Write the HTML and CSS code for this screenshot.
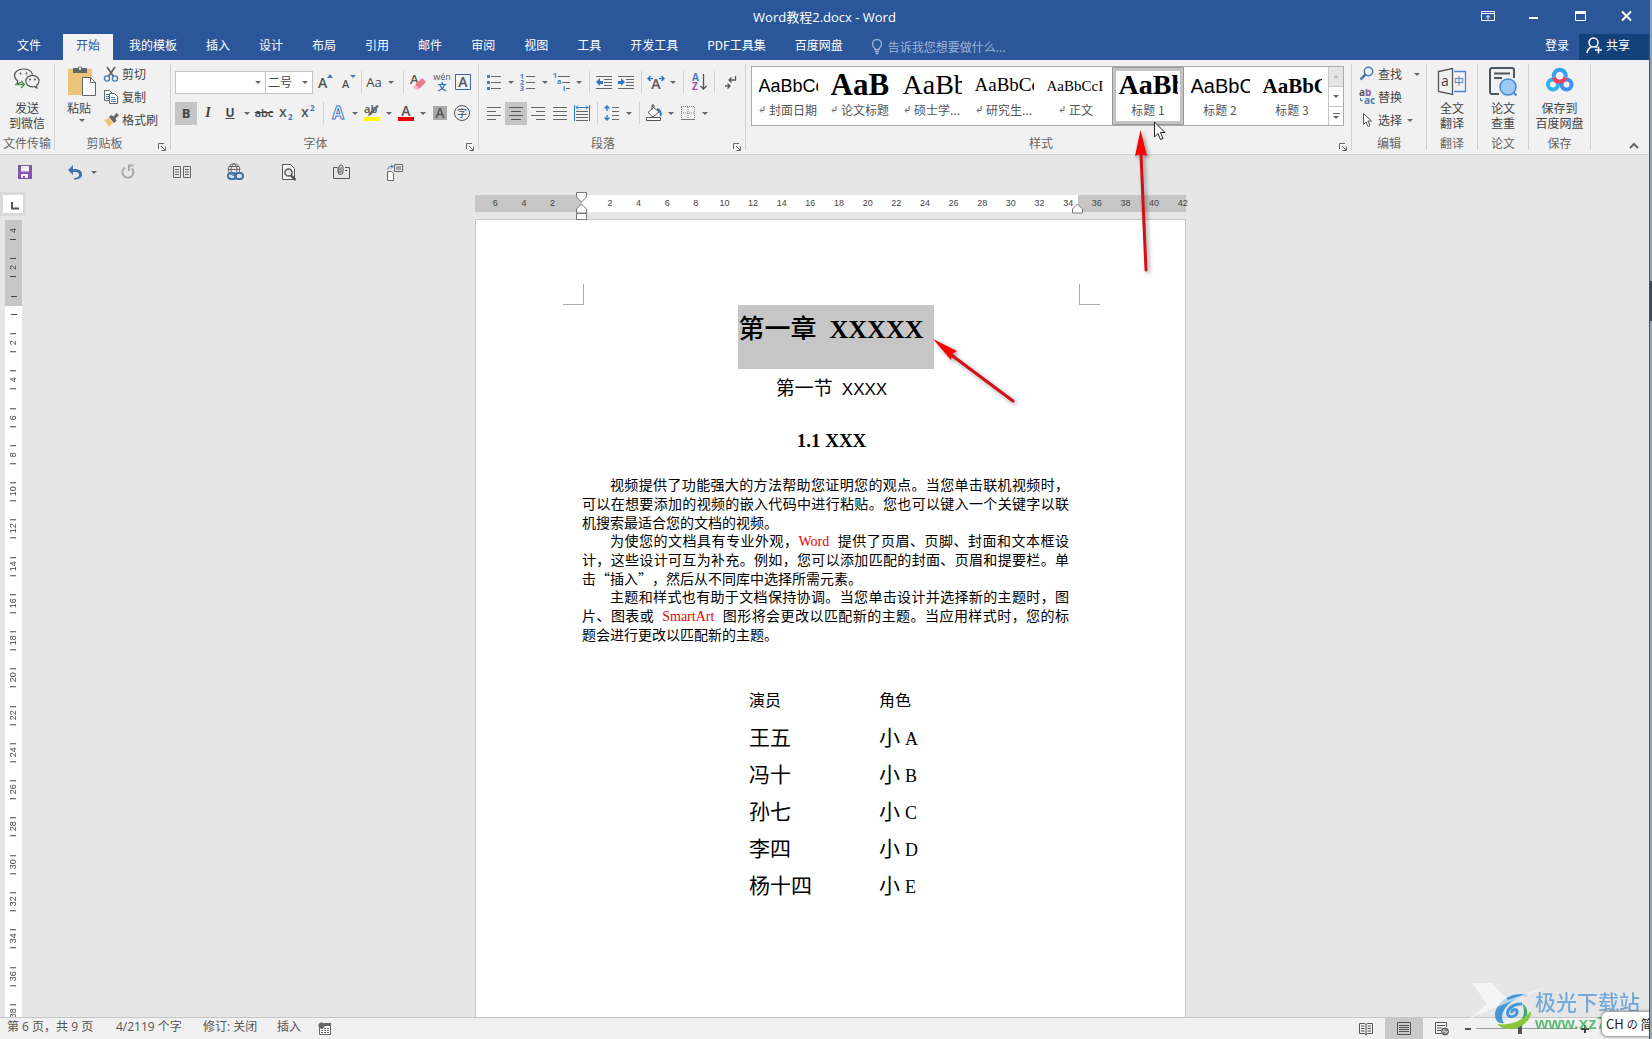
FILE: index.html
```html
<!DOCTYPE html>
<html lang="zh-CN">
<head>
<meta charset="utf-8">
<title>Word教程2.docx - Word</title>
<link rel="stylesheet" href="styles.css">
</head>
<body>
<div class="app">
  <header class="titlebar">
    <div class="doc-title">Word教程2.docx - Word</div>
    <div class="win-buttons">
      <button aria-label="功能区显示选项"><svg width="14" height="12" fill="none" stroke="#fff"><path d="M.5 1.5h13v9H.5zM.5 3.5h13M7 9.500V5.500M5 7.500l2-2 2 2"/></svg></button>
      <button aria-label="最小化"><svg width="10" height="12"><path d="M0 7h9v2H0z" fill="#fff"/></svg></button>
      <button aria-label="最大化"><svg width="11" height="12"><path d="M.5 1.500h10v9H.5z" fill="none" stroke="#fff"/><path d="M0 1h11v3H0z" fill="#fff"/></svg></button>
      <button aria-label="关闭"><svg width="11" height="12" stroke="#fff" stroke-width="2"><path d="M1 1.500l9 9M10 1.500l-9 9"/></svg></button>
    </div>
  </header>

  <nav class="tabs">
    <button class="tab file">文件</button>
    <button class="tab active">开始</button>
    <button class="tab">我的模板</button>
    <button class="tab">插入</button>
    <button class="tab">设计</button>
    <button class="tab">布局</button>
    <button class="tab">引用</button>
    <button class="tab">邮件</button>
    <button class="tab">审阅</button>
    <button class="tab">视图</button>
    <button class="tab">工具</button>
    <button class="tab">开发工具</button>
    <button class="tab">PDF工具集</button>
    <button class="tab">百度网盘</button>
    <button class="tell"><svg width="12" height="16" fill="none" stroke="#9db4d8" stroke-width="1.300"><path d="M4 10.500C4 8.500 1.500 8 1.500 5a4.500 4.500 0 0 1 9 0c0 3-2.500 3.500-2.500 5.500zM4 12.500h4M4.500 14.500h3"/></svg>告诉我您想要做什么...</button>
    <button class="login">登录</button>
    <button class="share"><svg width="16" height="17" fill="none" stroke="#fff" stroke-width="1.500"><circle cx="7.500" cy="5.500" r="4.500"/><path d="M1 16c.5-3 2-5 4.500-6.200M12.500 9.500v7M9 13h7M9.500 9.700l1.500 1"/></svg>共享</button>
  </nav>

  <div class="ribbon">
    <section class="group g-wechat">
      <button class="big"><svg width="28" height="32" fill="none" stroke="#555" stroke-width="1.200"><path d="M8 18.500c-1.500 0-2 .8-4 1.200l.8-2.700C2.500 15.500 1.500 13.500 1.500 11.500 1.500 7.500 5.500 5 10.500 5c4.500 0 8 2 9 5.500M14.500 21c-1-1-1.700-2-1.700-3.700 0-3.500 3-6 6.700-6s6.500 2.500 6.500 5.700c0 2-1 3.500-2.500 4.500l.5 2.500-2.700-1.500c-2 .5-4.800.2-6.800-1.500z"/><path d="M2 20.500h9M8 17l3.500 3.500L8 24" stroke="#4a9a55" stroke-width="1.500"/><g fill="#555" stroke="none"><circle cx="7.500" cy="9.500" r="1"/><circle cx="13.500" cy="9.500" r="1"/><circle cx="17" cy="15.500" r="1"/><circle cx="22" cy="15.500" r="1"/></g></svg><span>发送<br>到微信</span></button>
      <div class="label">文件传输</div>
    </section>

    <section class="group g-clip">
      <div class="clip">
        <button class="big paste"><svg width="30" height="32"><path d="M1 5h24v26H1z" fill="#ecc37a"/><path d="M6 4h4.500a2.800 2.800 0 0 1 5 0H20v5H6z" fill="#666"/><circle cx="13" cy="4.500" r="1.200" fill="#f1f1f1"/><path d="M15.500 13.500h8l5 5v13h-13z" fill="#fff" stroke="#666"/><path d="M23.500 13.500v5h5" fill="none" stroke="#666"/></svg><span>粘贴</span><i class="caret"></i></button>
        <div class="stack">
          <button><svg width="16" height="16" fill="none"><path d="M4 1l6.500 9.500M12 1L5.500 10.500" stroke="#666" stroke-width="1.800"/><circle cx="4" cy="12.500" r="2.600" stroke="#4a7ab5" stroke-width="1.300"/><circle cx="12" cy="12.500" r="2.600" stroke="#4a7ab5" stroke-width="1.300"/></svg>剪切</button>
          <button><svg width="16" height="16" fill="#fff" stroke="#666"><path d="M1.500 1.500h5l3 3v7h-8z"/><path d="M3 5.500h3M3 7.500h3M3 9.500h3" stroke="#4a7ab5"/><path d="M6.500 4.500h5l3 3v7h-8z"/><path d="M8 8.500h4M8 10.500h5M8 12.500h5" stroke="#4a7ab5"/></svg>复制</button>
          <button><svg width="16" height="16"><path d="M1 8l5-2 4 4.500L6 15z" fill="#ecc37a"/><path d="M6 5l2-2 2.500 1.500L13.500 1 16 3l-3.500 3.500 1 2.500-2.500 2z" fill="#666"/></svg>格式刷</button>
        </div>
      </div>
      <div class="label">剪贴板<svg class="launch" width="8" height="8" fill="none" stroke="#666"><path d="M.5 6V.5H6M3 3l4 4M7.500 3.500v4h-4"/></svg></div>
    </section>

    <section class="group g-font">
      <div class="row font1">
        <button class="combo" aria-label="字体"><span></span><i class="caret"></i></button>
        <button class="combo" aria-label="字号"><span>二号</span><i class="caret"></i></button>
        <button><svg class="ic"><text x="4" y="17" class="t14">A</text><path d="M13 7l3-4 3 4z" fill="#4a7ab5"/></svg></button>
        <button><svg class="ic"><text x="5" y="17" class="t12">A</text><path d="M13 4h6l-3 3z" fill="#4a7ab5"/></svg></button>
        <i class="sep"></i>
        <button class="split"><span class="aa">Aa</span><i class="caret"></i></button>
        <i class="sep"></i>
        <button><svg class="ic"><text x="3" y="13" class="t13">A</text><path d="M8 14l7-7 4 4-7 7z" fill="#e87a8c"/><path d="M8 14l4 4-2 1-4-3z" fill="#f2b4bd"/></svg></button>
        <button><svg class="ic"><text x="11" y="9" class="t11" text-anchor="middle">wén</text><text x="11" y="19" font-size="9" fill="#2f6db5" font-weight="700" text-anchor="middle">文</text></svg></button>
        <button><svg class="ic"><path d="M3.500 3.500h15v15h-15z" fill="none" stroke="#3f6797"/><text x="11" y="16" class="t15" text-anchor="middle">A</text></svg></button>
      </div>
      <div class="row font2">
        <button class="on"><b>B</b></button>
        <button><i class="italic">I</i></button>
        <button class="split"><u>U</u><i class="caret"></i></button>
        <button><s>abc</s></button>
        <button><svg class="ic"><text x="4" y="15" class="t15">x</text><text x="13" y="18" font-size="8" fill="#4a7ab5" font-weight="700">2</text></svg></button>
        <button><svg class="ic"><text x="4" y="15" class="t15">x</text><text x="13" y="9" font-size="8" fill="#4a7ab5" font-weight="700">2</text></svg></button>
        <i class="sep"></i>
        <button class="split"><svg class="ic"><text x="11" y="17" font-size="17" font-weight="700" text-anchor="middle" fill="#fff" stroke="#3f78bd">A</text></svg><i class="caret"></i></button>
        <button class="split"><svg class="ic"><text x="3" y="11" class="t12">ab</text><path d="M18 4l-8 9-3 1 1-3 8-8z" fill="#666"/><path d="M3 15h16v4H3z" fill="#ff0"/></svg><i class="caret"></i></button>
        <button class="split"><svg class="ic"><text x="11" y="14" class="t15" text-anchor="middle">A</text><path d="M3 15h16v4H3z" fill="#e60000"/></svg><i class="caret"></i></button>
        <button><svg class="ic"><path d="M4 4h14v14H4z" fill="#aaa"/><text x="11" y="16" class="t15" text-anchor="middle">A</text></svg></button>
        <button><svg class="ic"><circle cx="11" cy="11" r="7.500" fill="none" stroke="#555"/><text x="11" y="15" font-size="10" fill="#444" text-anchor="middle">字</text></svg></button>
      </div>
      <div class="label">字体<svg class="launch" width="8" height="8" fill="none" stroke="#666"><path d="M.5 6V.5H6M3 3l4 4M7.500 3.500v4h-4"/></svg></div>
    </section>

    <section class="group g-para">
      <div class="row para1">
        <button class="split"><svg class="ic"><path d="M8 5.500h10M8 11.500h10M8 17.500h10" stroke="#666"/><path d="M4 4h3v3H4zM4 10h3v3H4zM4 16h3v3H4z" fill="#4a7ab5"/></svg><i class="caret"></i></button>
        <button class="split"><svg class="ic"><path d="M9 5.500h9M9 11.500h9M9 17.500h9" stroke="#666"/><g font-size="7" font-weight="700" fill="#4a7ab5"><text x="3" y="8">1</text><text x="3" y="14">2</text><text x="3" y="20">3</text></g></svg><i class="caret"></i></button>
        <button class="split"><svg class="ic"><path d="M7 5.500h12M11 11.500h8M15 17.500h4" stroke="#666"/><g font-size="7" font-weight="700" fill="#4a7ab5"><text x="2" y="7">1</text><text x="6" y="13">a</text><text x="12" y="20">i</text></g></svg><i class="caret"></i></button>
        <i class="sep"></i>
        <button><svg class="ic"><path d="M3 5.500h16M11 8.500h8M11 11.500h8M11 14.500h8M3 17.500h16" stroke="#666"/><path d="M3 11l4-4v3h3v3H7v2z" fill="#2f78c4"/></svg></button>
        <button><svg class="ic"><path d="M3 5.500h16M11 8.500h8M11 11.500h8M11 14.500h8M3 17.500h16" stroke="#666"/><path d="M10 11L6 7v3H3v3h3v2z" fill="#2f78c4"/></svg></button>
        <i class="sep"></i>
        <button class="split"><svg class="ic"><text x="11" y="18" class="t14" text-anchor="middle">A</text><path d="M3 7.500h5M5.500 5L3 7.500 5.500 10M19 7.500h-5M16.500 5L19 7.500 16.500 10" fill="none" stroke="#2f78c4" stroke-width="1.500"/></svg><i class="caret"></i></button>
        <i class="sep"></i>
        <button><svg class="ic"><g font-size="10" font-weight="700"><text x="4" y="10" fill="#4a7ab5">A</text><text x="4" y="19" fill="#9154a5">Z</text></g><path d="M15.500 3v15M12.500 15l3 3 3-3" fill="none" stroke="#555" stroke-width="1.300"/></svg></button>
        <i class="sep"></i>
        <button><svg class="ic" fill="none" stroke="#555" stroke-width="1.300"><path d="M16.500 5v4H10M12.500 6.500L10 9l2.500 2.500M6 15h5M8.500 12.500L11 15l-2.500 2.500"/></svg></button>
      </div>
      <div class="row para2">
        <button><svg class="ic" stroke="#666"><path d="M4 5.500h14M4 9.500h9M4 13.500h14M4 17.500h9"/></svg></button>
        <button class="on"><svg class="ic" stroke="#555"><path d="M4 5.500h14M6 9.500h10M4 13.500h14M6 17.500h10"/></svg></button>
        <button><svg class="ic" stroke="#666"><path d="M4 5.500h14M9 9.500h9M4 13.500h14M9 17.500h9"/></svg></button>
        <button><svg class="ic" stroke="#666"><path d="M4 5.500h14M4 9.500h14M4 13.500h14M4 17.500h14"/></svg></button>
        <button><svg class="ic" fill="none"><path d="M3.500 3v16M18.500 3v16M5 5.500h12M7 3.500l-2 2 2 2M15 3.500l2 2-2 2" stroke="#2f78c4"/><path d="M5 9.500h12M5 12.500h12M5 15.500h12M5 18.500h12" stroke="#666"/></svg></button>
        <i class="sep"></i>
        <button class="split"><svg class="ic" fill="none"><path d="M6 4v5M6 13v5M3.500 6.500L6 4l2.500 2.500M3.500 15.500L6 18l2.500-2.500" stroke="#2f78c4" stroke-width="1.400"/><path d="M11 5.500h7M11 9.500h7M11 13.500h7M11 17.500h7" stroke="#666"/></svg><i class="caret"></i></button>
        <i class="sep"></i>
        <button class="split"><svg class="ic" fill="none" stroke="#555"><path d="M3.500 15.500h14v3h-14z" fill="#fff"/><path d="M9 4l7 6-6 5-5-4.500L11 5M9 8V3h2v2" fill="#fff"/><path d="M14 7c4 1 4 4 3.500 7" stroke="#2f78c4" stroke-width="2"/></svg><i class="caret"></i></button>
        <button class="split"><svg class="ic" fill="none" stroke="#777"><path d="M4.500 5v12M4 4.500h14M17.500 5v12M11 5v12M4 11h14" stroke-dasharray="1 1"/><path d="M4 17.500h14"/></svg><i class="caret"></i></button>
      </div>
      <div class="label">段落<svg class="launch" width="8" height="8" fill="none" stroke="#666"><path d="M.5 6V.5H6M3 3l4 4M7.500 3.500v4h-4"/></svg></div>
    </section>

    <section class="group g-styles">
      <div class="gallery">
        <button class="style"><span class="sample s1">AaBbCc</span><span class="name"><svg class="pm" width="6" height="8"><path d="M5 0v4.500H1.500M3 2.500l-2 2 2 2" fill="none" stroke="#666"/></svg>封面日期</span></button>
        <button class="style"><span class="sample s2">AaB</span><span class="name"><svg class="pm" width="6" height="8"><path d="M5 0v4.500H1.500M3 2.500l-2 2 2 2" fill="none" stroke="#666"/></svg>论文标题</span></button>
        <button class="style"><span class="sample s3">AaBb</span><span class="name"><svg class="pm" width="6" height="8"><path d="M5 0v4.500H1.500M3 2.500l-2 2 2 2" fill="none" stroke="#666"/></svg>硕士学...</span></button>
        <button class="style"><span class="sample s4">AaBbCc</span><span class="name"><svg class="pm" width="6" height="8"><path d="M5 0v4.500H1.500M3 2.500l-2 2 2 2" fill="none" stroke="#666"/></svg>研究生...</span></button>
        <button class="style"><span class="sample s5">AaBbCcI</span><span class="name"><svg class="pm" width="6" height="8"><path d="M5 0v4.500H1.500M3 2.500l-2 2 2 2" fill="none" stroke="#666"/></svg>正文</span></button>
        <button class="style selected"><span class="sample s6">AaBb</span><span class="name">标题 1</span></button>
        <button class="style"><span class="sample s7">AaBbC</span><span class="name">标题 2</span></button>
        <button class="style"><span class="sample s8">AaBbC</span><span class="name">标题 3</span></button>
        <div class="scroll">
          <button class="off" aria-label="上一行"><i class="caret up"></i></button>
          <button aria-label="下一行"><i class="caret"></i></button>
          <button class="more" aria-label="其他"><i class="caret"></i></button>
        </div>
      </div>
      <div class="label">样式<svg class="launch" width="8" height="8" fill="none" stroke="#666"><path d="M.5 6V.5H6M3 3l4 4M7.500 3.500v4h-4"/></svg></div>
    </section>

    <section class="group g-edit">
      <div class="stack">
        <button><svg width="16" height="16" fill="none"><circle cx="9.500" cy="5.500" r="4.200" stroke="#4a7ab5" stroke-width="1.500"/><path d="M6.500 8.500L1.500 13.500" stroke="#4a7ab5" stroke-width="2.500"/></svg>查找<i class="caret far"></i></button>
        <button><svg width="16" height="16" font-size="10" font-weight="700"><text x="0" y="7" fill="#555">a<tspan fill="#9154a5">b</tspan></text><text x="5" y="15" fill="#4a7ab5">ac</text><path d="M1.500 9v2.500H4" fill="none" stroke="#4a7ab5"/></svg>替换</button>
        <button><svg width="16" height="16"><path d="M4.500 1.500v11l2.500-2.500 2 4.500 2-1-2-4.500h3.500z" fill="#fff" stroke="#555"/></svg>选择<i class="caret near"></i></button>
      </div>
      <div class="label">编辑</div>
    </section>

    <section class="group g-small">
      <button class="big"><svg width="30" height="32"><path d="M1.500 7.500l14-3v26l-14-3zM15.500 4.500v26" fill="none" stroke="#555" stroke-width="1.300"/><path d="M17 7.500h11.500v20H17" fill="none" stroke="#4a86d8" stroke-width="1.300"/><text x="4" y="22" font-size="14" fill="#444">a</text><text x="17" y="21" font-size="10" fill="#3c78c8">中</text></svg><span>全文<br>翻译</span></button>
      <div class="label">翻译</div>
    </section>
    <section class="group g-small">
      <button class="big"><svg width="30" height="32" fill="none" stroke="#4c5560" stroke-width="2"><path d="M11 30H3.500A2 2 0 0 1 2 28V5.500A2 2 0 0 1 4 4h20a2 2 0 0 1 2 2v8M6 9.500h16M6 14h8"/><circle cx="20" cy="23" r="8" fill="#9ccaf3" stroke="#3d8ad8" stroke-width="1.500"/><path d="M25.500 28.500l3 3" stroke="#3d8ad8"/></svg><span>论文<br>查重</span></button>
      <div class="label">论文</div>
    </section>
    <section class="group g-baidu">
      <button class="big"><svg width="30" height="32" fill="none" stroke-width="4"><circle cx="8" cy="20.500" r="5" stroke="#31b3ea"/><circle cx="21.500" cy="20.500" r="5" stroke="#3d8ff0"/><path d="M9 13.500a6 6 0 1 1 11.500 0" stroke="#35a3ec"/><path d="M9 13.500c1 5 9 6 11.500 0" stroke="#ee4260"/></svg><span>保存到<br>百度网盘</span></button>
      <div class="label">保存</div>
    </section>
    <button class="collapse" aria-label="折叠功能区"><svg width="10" height="7"><path d="M1 6l4-4 4 4" fill="none" stroke="#666" stroke-width="2"/></svg></button>
  </div>

  <div class="qat">
    <button aria-label="保存"><svg width="16" height="16"><path d="M1 1h14v14H1z" fill="#8055a5"/><path d="M4 2h8v5.500H4zM4 10h7v4H4z" fill="#f4eef8"/><path d="M6 12h2v3H6z" fill="#8055a5"/></svg></button>
    <button aria-label="撤消" class="undo"><svg width="16" height="16"><path d="M6 1L1 6l5 5V8c4 0 6 0 6 3 0 2-2 3-5 3v1.500c5 0 8-1.500 8-5C15 6.500 12 5 6 5z" fill="#3f72af"/></svg><i class="caret"></i></button>
    <button aria-label="恢复"><svg width="16" height="16"><path d="M5 3.500a5.500 5.500 0 1 0 7 1M8 1.500h5.500M9 2v5" fill="none" stroke="#aaa" stroke-width="2"/></svg></button>
    <button aria-label="并排"><svg width="18" height="14" fill="none" stroke="#666"><path d="M.5 1.500h7v11h-7zM10.500 1.500h7v11h-7zM2 4.500h4M2 7h4M2 9.500h4M12 4.500h4M12 7h4M12 9.500h4"/></svg></button>
    <button aria-label="超链接"><svg width="18" height="18" fill="none"><circle cx="8" cy="6.500" r="5.800" stroke="#666"/><path d="M2 6.500h12M8 .5c-4 3-4 9 0 12M8 .5c4 3 4 9 0 12M3 3.500h10" stroke="#666"/><rect x="2" y="10" width="8" height="6" rx="3" stroke="#3f72af" stroke-width="2"/><rect x="9" y="10" width="8" height="6" rx="3" stroke="#3f72af" stroke-width="2"/></svg></button>
    <button aria-label="打印预览"><svg width="16" height="17" fill="none" stroke="#555"><path d="M1.500 15.500V.5h8l4 4v11z" fill="#f7f7f7"/><circle cx="7.500" cy="8.500" r="3.600" stroke-width="1.500" fill="#e6e6e6"/><path d="M10 11.500l4.500 4.500" stroke-width="2.500"/></svg></button>
    <button aria-label="附件"><svg width="17" height="16" fill="none" stroke="#555"><path d="M4 3.500H.5v11h16v-11H12"/><path d="M5 3v5a2.500 2.500 0 0 0 5 0V3a2 2 0 0 0-4 0v5a1 1 0 0 0 2 0V3M12 6.500h2" /></svg></button>
    <button aria-label="转换"><svg width="17" height="17" fill="none" stroke="#666"><path d="M8.500.5h8v7h-8zM10 3h5M10 5h5"/><path d="M1.500 7.500h4l2 2v7h-6z" fill="#fff"/><path d="M2 5.500C2 3 4 2 7 2.500M5 .5l2 2-2 2" stroke="#3f72af"/></svg></button>
  </div>

  <main class="workspace">
    <div class="vruler-col">
      <button class="tabstop" aria-label="制表符"><svg width="8" height="8"><path d="M1 0v6.500h7" fill="none" stroke="#555" stroke-width="2"/></svg></button>
      <div class="vruler">
        <div class="vneg"><span>4</span><span>2</span></div>
        <div class="vpos"><span>2</span><span>4</span><span>6</span><span>8</span><span>10</span><span>12</span><span>14</span><span>16</span><span>18</span><span>20</span><span>22</span><span>24</span><span>26</span><span>28</span><span>30</span><span>32</span><span>34</span><span>36</span><span>38</span></div>
      </div>
    </div>
    <div class="canvas">
      <div class="hruler">
        <div class="nums"><span>6</span><span>4</span><span>2</span><span></span><span>2</span><span>4</span><span>6</span><span>8</span><span>10</span><span>12</span><span>14</span><span>16</span><span>18</span><span>20</span><span>22</span><span>24</span><span>26</span><span>28</span><span>30</span><span>32</span><span>34</span><span>36</span><span>38</span><span>40</span><span>42</span></div>
        <svg class="mark-left" width="12" height="29" fill="#fff" stroke="#777"><path d="M.5.500h10V5l-5 5-5-5zM5.500 12l5 5v4H.5v-4zM.5 21.500h10v6H.5z"/></svg>
        <svg class="mark-right" width="12" height="12" fill="#fff" stroke="#777"><path d="M5.500 1l5 5v4H.5V6z"/></svg>
      </div>
      <article class="page">
        <div class="corners"><i class="corner l"></i><i class="corner r"></i></div>
        <div class="text">
          <h1>第一章<span class="latin1">XXXXX</span></h1>
          <h2>第一节<span class="latin2">XXXX</span></h2>
          <h3>1.1 XXX</h3>
          <p>视频提供了功能强大的方法帮助您证明您的观点。当您单击联机视频时，可以在想要添加的视频的嵌入代码中进行粘贴。您也可以键入一个关键字以联机搜索最适合您的文档的视频。</p>
          <p>为使您的文档具有专业外观，<em>Word</em>提供了页眉、页脚、封面和文本框设计，这些设计可互为补充。例如，您可以添加匹配的封面、页眉和提要栏。单击“插入”，然后从不同库中选择所需元素。</p>
          <p>主题和样式也有助于文档保持协调。当您单击设计并选择新的主题时，图片、图表或<em class="mid">SmartArt</em>图形将会更改以匹配新的主题。当应用样式时，您的标题会进行更改以匹配新的主题。</p>
          <table>
            <thead><tr><th>演员</th><th>角色</th></tr></thead>
            <tbody>
              <tr><td>王五</td><td>小<span>A</span></td></tr>
              <tr><td>冯十</td><td>小<span>B</span></td></tr>
              <tr><td>孙七</td><td>小<span>C</span></td></tr>
              <tr><td>李四</td><td>小<span>D</span></td></tr>
              <tr><td>杨十四</td><td>小<span>E</span></td></tr>
            </tbody>
          </table>
        </div>
      </article>
    </div>
  </main>

  <footer class="status">
    <span class="st-page">第 6 页，共 9 页</span>
    <span class="st-words">4/2119 个字</span>
    <span class="st-rev">修订: 关闭</span>
    <span class="st-ins">插入</span>
    <svg width="14" height="14"><path d="M1.500 3.500h11v9h-11z" fill="#fff" stroke="#666"/><path d="M6 1h7v3H6z" fill="#666"/><path d="M3 6.500h8M3 8.500h8M3 10.500h8" stroke="#666" stroke-dasharray="2 1"/><circle cx="3.500" cy="3.500" r="3" fill="#666"/></svg>
    <div class="views">
      <button aria-label="阅读视图"><svg width="14" height="14" fill="none" stroke="#555"><path d="M7 2.500L5.500 1.500h-5v10h5L7 12.500l1.500-1h5v-10h-5zM7 2.500v11M2 4h3.500M2 6.500h3.500M2 9h3.500M8.500 4H12M8.500 6.500H12M8.500 9H12"/></svg></button>
      <button class="on" aria-label="页面视图"><svg width="14" height="14" fill="none" stroke="#555"><path d="M.5.500h13v12H.5zM2 3.500h10M2 5.500h10M2 7.500h10M2 9.500h10"/></svg></button>
      <button aria-label="Web 版式"><svg width="14" height="14" fill="none" stroke="#555"><path d="M6 11.500H.5v-11h11V5M2 3.500h8M2 6h5M2 8.500h4"/><circle cx="10" cy="9.500" r="3.500" fill="#888"/><path d="M7.500 9.500l2-1 1 2 2-1" stroke="#eee"/></svg></button>
    </div>
    <button class="zoom-btn" aria-label="缩小"><svg width="8" height="8"><path d="M1 3h6v2H1z" fill="#555"/></svg></button>
    <input type="range" min="10" max="190" value="88" aria-label="缩放">
    <button class="zoom-btn" aria-label="放大"><svg width="8" height="8"><path d="M0 3h3V0h2v3h3v2H5v3H3V5H0z" fill="#444"/></svg></button>
  </footer>

  <svg class="overlay pointer" width="14" height="20"><path d="M1.500 1v15l3.500-3.500 2.500 6 2.500-1-2.500-6H12z" fill="#fff" stroke="#222"/></svg>
  <svg class="overlay arrow-up" width="30" height="150"><path d="M11 24l5 116" stroke="#d01018" stroke-width="3" stroke-linecap="round"/><path d="M10.500 0L17 26l-6-2-6 2z" fill="#f00"/></svg>
  <svg class="overlay arrow-diag" width="96" height="76"><path d="M18 17l63 47" stroke="#d01018" stroke-width="3" stroke-linecap="round"/><path d="M1 2l24 12-5 3-1 6z" fill="#f00"/></svg>

  <div class="overlay watermark">
    <svg class="swoosh" width="180" height="50"><path d="M15 2h20l16 17L95 4 20 34 0 48l30-25z" fill="#fff" opacity=".6"/></svg>
    <svg class="globe" width="42" height="40" fill="none"><path d="M36 4C20-1 3 12 3 24c0 6 4 9 9 8-6-9 3-24 24-28z" fill="#4497d8"/><path d="M30 13c-9-1-16 6-14 11 3 4 10 0 9-4-1-3-6-1-5 2" stroke="#4497d8" stroke-width="3"/><path d="M30 12c10 8 5 20-8 23 12-7 11-17 8-23z" fill="#3aa876"/><path d="M5 33c12 2 26-3 34-13 1 9-10 18-21 18-6 0-10-2-13-5z" fill="#8cc63f"/></svg>
    <div class="wm-text"><span class="wm-cn">极光下载站</span><span class="wm-url">www.xz7.com</span></div>
  </div>
  <div class="overlay ime">CH <span>の</span> 简</div>
</div>
</body>
</html>
```
FILE: styles.css
```css
* { box-sizing: border-box; }

body {
  margin: 0;
  background: linear-gradient(#93a5b3 281px, #3a4a5c 281px, #3a4a5c 321px, #93a5b3 321px);
  font-family: "Noto Sans CJK SC", sans-serif;
  font-size: 12px;
  color: #444;
}

button {
  display: flex;
  align-items: center;
  justify-content: center;
  margin: 0;
  padding: 0;
  border: 0;
  background: none;
  color: inherit;
  font: inherit;
  line-height: 14px;
  white-space: nowrap;
}

svg { display: block; flex: none; }
svg text { font-family: "Open Sans", "Noto Sans CJK SC", sans-serif; }

.app {
  position: relative;
  display: flex;
  flex-direction: column;
  height: 100vh;
  margin-right: 2px;
  border-right: 1px solid #2b579a;
  overflow: hidden;
}

/* Title bar */
.titlebar {
  display: grid;
  grid-template-columns: 184px 1fr 184px;
  height: 34px;
  flex: none;
  background: #2b579a;
  color: #fff;
}
.doc-title {
  grid-column: 2;
  font: 13px/34px "Open Sans", "Noto Sans CJK SC", sans-serif;
  text-align: center;
}
.win-buttons { display: grid; grid-template-columns: repeat(4, 46px); padding-bottom: 2px; }

/* Tabs */
.tabs {
  display: flex;
  gap: 3px;
  height: 26px;
  flex: none;
  padding-left: 4px;
  background: #2b579a;
  color: #fff;
}
.tab { padding: 0 13px 4px; }
.tab.file { margin-right: 6px; }
.tab.active { background: #f1f1f1; color: #2b579a; }
.tell { gap: 5px; margin-left: 12px; color: #9db4d8; }
.login { margin-left: auto; padding: 0 7px 4px; }
.share { gap: 4px; width: 70px; padding: 0 12px 4px 0; background: #124078; }

/* Ribbon */
.ribbon {
  display: flex;
  height: 95px;
  flex: none;
  padding: 4px 0;
  background: #f1f1f1;
  border-bottom: 1px solid #d2d2d2;
}
.group {
  display: flex;
  flex-direction: column;
  flex: none;
  border-right: 1px solid #d0d0d0;
}
.label {
  position: relative;
  margin-top: auto;
  color: #666;
  line-height: 14px;
  text-align: center;
}
.launch { position: absolute; right: 4px; bottom: -1px; }
.g-wechat { width: 55px; }
.g-clip { width: 116px; }
.g-clip .label { padding-right: 16px; }
.g-font { width: 308px; padding-left: 4px; }
.g-para { width: 267px; padding-left: 4px; }
.g-font .label, .g-para .label { padding-right: 22px; }
.g-styles { flex: 1; min-width: 600px; padding: 0 7px 0 5px; }
.g-styles .label { margin-right: -7px; padding-right: 20px; }
.g-edit { width: 75px; padding-left: 7px; }
.g-edit .label { padding-right: 7px; }
.g-small { width: 51px; }
.g-baidu { width: 62px; }

.big { flex-direction: column; width: 100%; }
.big span { margin-top: 4px; line-height: 15px; }
.clip { display: flex; padding-left: 12px; gap: 6px; align-items: flex-start; }
.paste { width: 30px; }
.paste span { align-self: flex-start; }
.paste .caret { margin-top: 4px; }
.stack button { gap: 3px; height: 23px; padding-bottom: 3px; justify-content: flex-start; }

.caret {
  width: 0;
  height: 0;
  border: 3px solid transparent;
  border-top-color: #666;
  border-bottom-width: 0;
}
.caret.up { border-top-width: 0; border-bottom: 3px solid #bbb; }
.caret.far { margin-left: 9px; }
.caret.near { margin-left: 2px; }

.row { display: grid; align-items: center; height: 24px; }
.row.font1, .row.para1 { margin: 6px 0 7px; }
.font1 { grid-template-columns: 91px 47px 24px 22px 4px 38px 4px 26px 21px 22px; }
.font2 { grid-template-columns: 22px 22px 34px 22px 22px 22px 8px 34px 34px 34px 22px 22px; }
.para1 { grid-template-columns: 34px 34px 34px 8px 22px 22px 8px 34px 8px 24px 6px 26px; }
.para2 { grid-template-columns: 22px 22px 22px 22px 22px 8px 34px 8px 34px 34px; }
.ic { width: 22px; height: 22px; overflow: visible; }
.row button { height: 23px; }
.row .on { background: #c5c5c5; }
.split { justify-content: flex-start; }
.split .caret { margin-left: 3px; }
.sep { width: 1px; height: 22px; margin: 0 auto; background: #d0d0d0; }
.row .combo {
  justify-content: space-between;
  padding: 0 4px 0 2px;
  border: 1px solid #c3c3c3;
  background: #fff;
}
.combo + .combo { margin-left: -1px; }
.aa { width: 22px; font: 13px/20px "Open Sans", sans-serif; text-align: center; }
.row b, .italic, .row u, .row s { font-family: "Open Sans", sans-serif; font-weight: 700; text-align: center; }
.row b { font-size: 13px; }
.row .italic { font-family: "Liberation Serif", serif; font-size: 14px; }
.row u { width: 22px; font-size: 12px; }
.row s { font-size: 11px; font-weight: 600; }
.t11, .t12, .t13, .t14, .t15 { fill: #555; font-weight: 600; }
.t11 { font-size: 9px; font-weight: 400; }
.t12 { font-size: 11px; }
.t13 { font-size: 13px; }
.t14 { font-size: 14px; }
.t15 { font-size: 14px; }

/* Style gallery */
.gallery {
  display: flex;
  height: 60px;
  margin-top: 2px;
  border: 1px solid #ababab;
  background: #fff;
}
.style {
  flex: 1 1 72px;
  flex-direction: column;
  justify-content: flex-start;
  min-width: 0;
  padding-top: 5px;
}
.style.selected { padding-top: 1px; border: 4px solid #c3c3c3; outline: 1px solid #999; outline-offset: -1px; }
.sample {
  width: 59px;
  height: 28px;
  flex: none;
  overflow: hidden;
  color: #000;
  font-family: "Liberation Serif", serif;
  line-height: 26px;
  text-align: left;
}
.name { display: flex; align-items: center; gap: 4px; margin-top: 2px; color: #555; line-height: 16px; }
.s1 { font: 18px/28px "Liberation Sans", sans-serif; }
.s2 { font-size: 31px; font-weight: 700; }
.s3 { font-size: 28px; }
.s4 { font-size: 19px; }
.s5 { font-size: 15px; line-height: 28px; }
.s6 { font-size: 28px; font-weight: 700; }
.s7 { font: 20px/28px "Liberation Sans", sans-serif; }
.s8 { font-size: 21px; font-weight: 700; line-height: 28px; }
.scroll { display: grid; grid-template-rows: repeat(3, 1fr); width: 15px; border-left: 1px solid #c6c6c6; }
.scroll button + button { border-top: 1px solid #c6c6c6; }
.scroll .off { background: #e5e5e5; }
.scroll .more { flex-direction: column; gap: 2px; }
.more::before { content: ""; width: 7px; height: 1px; background: #666; }
.collapse { width: 58px; align-items: flex-end; padding: 0 0 1px 28px; }

/* Quick access bar */
.qat {
  display: grid;
  grid-template-columns: 50px 56px 44px 64px 42px 66px 38px 68px;
  height: 34px;
  flex: none;
  background: #e6e6e6;
}
.qat .undo { justify-content: flex-start; gap: 8px; padding-left: 17px; }

/* Workspace */
.workspace {
  display: grid;
  grid-template-columns: 26px 1fr;
  flex: 1;
  min-height: 0;
  background: #e6e6e6;
  overflow: hidden;
}
.vruler-col { padding-top: 3px; }
.tabstop { width: 26px; height: 24px; padding: 4px 0 0 4px; background: #fff; border: 3px solid #dadada; }
.vruler { width: 17px; margin: 4px 0 0 5px; background: #fff; }
.vneg { display: flex; flex-direction: column; justify-content: flex-end; height: 86px; background: #c6c6c6; overflow: hidden; }
.vneg span { flex: none; height: 37px; }
.vneg::after { content: ""; flex: none; height: 20px; background: linear-gradient(#444, #444) center / 6px 1px no-repeat; }
.vpos { display: flex; flex-direction: column; height: 726px; padding-top: 18px; background: linear-gradient(#444, #444) center 8px / 6px 1px no-repeat; }
.vpos span { flex: 1; }
.vruler span {
  display: flex;
  align-items: center;
  justify-content: center;
  writing-mode: vertical-rl;
  font: 9px/17px "Liberation Sans", sans-serif;
  color: #444;
  transform: rotate(180deg);
  background-image: linear-gradient(#444, #444), linear-gradient(#444, #444);
  background-position: center 25%, center 75%;
  background-size: 6px 1px;
  background-repeat: no-repeat;
}
.vneg span:first-child { background-image: linear-gradient(#444, #444); }

.canvas { display: flex; flex-direction: column; align-items: center; min-height: 0; padding: 6px 14px 0 0; }
.hruler {
  position: relative;
  width: 711px;
  height: 17px;
  flex: none;
  padding-left: 6px;
  background: linear-gradient(90deg, #c6c6c6 107px, #fff 107px, #fff 603px, #c6c6c6 603px);
}
.nums { display: flex; width: 716px; }
.nums span { flex: 1; font: 9px/17px "Liberation Sans", sans-serif; text-align: center; }
.mark-left { position: absolute; left: 101px; top: -3px; }
.mark-right { position: absolute; left: 597px; top: 8px; }

.page {
  width: 711px;
  flex: 1 0 auto;
  margin-top: 7px;
  padding-top: 64px;
  border: 1px solid #c6c6c6;
  background: #fff;
  color: #000;
}
.corners { display: flex; justify-content: space-between; padding: 0 85px 0 87px; }
.corner { width: 21px; height: 21px; border-bottom: 1px solid #aaa; }
.corner.l { border-right: 1px solid #aaa; }
.corner.r { border-left: 1px solid #aaa; }
.text { display: flex; flex-direction: column; align-items: center; padding: 0 104px 0 106px; font-kerning: none; text-spacing-trim: space-all; }
h1, h2, h3, p { margin: 0; }
h1 { margin-left: 9px; padding: 0 11px 20px 1px; background: #c6c6c6; font-size: 26px; font-weight: 500; line-height: 44px; }
.latin1 { margin-left: 13px; font-family: "Liberation Serif", serif; font-weight: 700; line-height: 0; }
h2 { font-size: 19px; font-weight: 400; line-height: 36px; }
.latin2 { margin-left: 9px; font: 17px/0 "Liberation Sans", sans-serif; }
h3 { margin: 17px 0 15px; font: 700 19px/38px "Liberation Serif", serif; }
p { width: 487px; align-self: flex-start; margin-bottom: -1px; font-size: 14px; line-height: 19px; text-align: justify; text-indent: 28px; }
em { margin-right: 8px; color: #e00; font: 14px/0 "Liberation Serif", serif; }
em.mid { margin-left: 8px; }
table { align-self: flex-start; margin: 38px 0 0 167px; border-collapse: collapse; font-size: 21px; line-height: 37px; }
th, td { width: 130px; height: 37px; padding: 0; text-align: left; font-weight: 400; }
th { font-size: 16px; }
td span { margin-left: 5px; font: 18px/0 "Liberation Serif", serif; }

/* Status bar */
.status {
  display: flex;
  align-items: center;
  height: 22px;
  flex: none;
  padding: 0 57px 0 7px;
  background: #f1f1f1;
  border-top: 1px solid #c6c6c6;
  color: #555;
  font-family: "Open Sans", "Noto Sans CJK SC", sans-serif;
  line-height: 14px;
  white-space: nowrap;
}
.status span { padding-bottom: 3px; }
.st-page { width: 109px; }
.st-words { width: 87px; }
.st-rev { width: 74px; }
.st-ins { width: 41px; }
.views { display: flex; align-self: stretch; margin-left: auto; }
.views button { width: 38px; }
.views .on { background: #c9c9c9; }
.zoom-btn { width: 14px; height: 14px; }
input[type="range"] {
  width: 101px;
  height: 14px;
  margin: 0 1px;
  appearance: none;
  background: linear-gradient(#999, #999) center / 100% 1px no-repeat;
}
input[type="range"]::-webkit-slider-thumb { appearance: none; width: 4px; height: 11px; background: #555; }

/* Annotations above the window */
.overlay { position: absolute; pointer-events: none; }
.pointer { left: 1153px; top: 121px; }
.arrow-up { left: 1130px; top: 130px; filter: drop-shadow(2px 2px 2px #0006); }
.arrow-diag { left: 932px; top: 337px; filter: drop-shadow(2px 2px 2px #0006); }
.watermark { right: 0; bottom: 5px; display: flex; width: 186px; height: 53px; padding-left: 29px; align-items: flex-end; }
.swoosh { position: absolute; left: -6px; top: 0; }
.globe { margin-bottom: 3px; }
.wm-text { display: flex; flex-direction: column; margin-left: 1px; opacity: .8; white-space: nowrap; }
.wm-cn { color: #5a9bd4; font-size: 21px; font-weight: 500; line-height: 25px; }
.wm-url { color: #3fae5c; font: 600 17px/20px "Liberation Sans", sans-serif; }
.ime {
  right: -14px;
  bottom: 2px;
  width: 62px;
  height: 26px;
  padding-left: 4px;
  border: 1px solid #aaa;
  border-radius: 6px;
  background: #fff;
  box-shadow: 0 0 3px #0006;
  color: #222;
  font-size: 13px;
  line-height: 24px;
  white-space: nowrap;
}
.ime span { font-size: 11px; }
```
